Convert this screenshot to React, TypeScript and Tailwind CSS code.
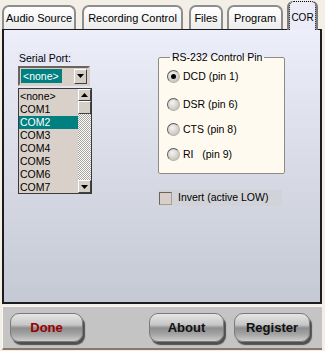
import React from "react";

function Radio({ checked }: { checked?: boolean }) {
  return (
    <div className="w-[13px] h-[13px] rounded-full border border-[#5a5a5a] border-b-[#b0b0b0] border-r-[#b0b0b0] bg-[radial-gradient(circle_at_40%_35%,#f4f4f4_0%,#d6d2ca_55%,#b8b4ac_100%)] flex items-center justify-center shrink-0">
      {checked ? <div className="w-[5px] h-[5px] rounded-full bg-black" /> : null}
    </div>
  );
}

function ArrowBtn({ dir, cls }: { dir: "up" | "down"; cls: string }) {
  return (
    <div className={"bg-[#d4d0c8] border border-t-white border-l-white border-r-[#404040] border-b-[#404040] flex items-center justify-center shrink-0 " + cls}>
      <svg width="7" height="4" viewBox="0 0 7 4">
        {dir === "down" ? <polygon points="0,0 7,0 3.5,4" fill="#000" /> : <polygon points="0,4 7,4 3.5,0" fill="#000" />}
      </svg>
    </div>
  );
}

const items = ["<none>", "COM1", "COM2", "COM3", "COM4", "COM5", "COM6", "COM7"];

export default function App() {
  return (
    <div className="w-[325px] h-[351px] bg-[#f3eee6] overflow-hidden font-['Liberation_Sans',Arial,sans-serif] text-black">
      {/* Tabs */}
      <div className="flex items-end h-[29px] pl-[2px]">
        <div className="w-[74px] h-[24px] flex items-center justify-center rounded-t-[7px] border-2 border-b-0 border-[#8d8d8d] bg-gradient-to-b from-white to-[#ececec] text-[11px] leading-none">Audio Source</div>
        <div className="ml-[6px] w-[101px] h-[24px] flex items-center justify-center rounded-t-[7px] border-2 border-b-0 border-[#8d8d8d] bg-gradient-to-b from-white to-[#ececec] text-[11px] leading-none">Recording Control</div>
        <div className="ml-[6px] w-[34px] h-[24px] flex items-center justify-center rounded-t-[7px] border-2 border-b-0 border-[#8d8d8d] bg-gradient-to-b from-white to-[#ececec] text-[11px] leading-none">Files</div>
        <div className="ml-[4px] w-[56px] h-[24px] flex items-center justify-center rounded-t-[7px] border-2 border-b-0 border-[#8d8d8d] bg-gradient-to-b from-white to-[#ececec] text-[11px] leading-none">Program</div>
        <div className="ml-[4px] w-[31px] h-[29px] -mb-[1px] relative z-10 rounded-t-[6px] border-x-2 border-[#7c7c7c] bg-[#ebecf8]">
          <div className="h-full border border-b-0 border-dotted border-black rounded-t-[5px] flex items-start justify-center pt-[11px] text-[10px] leading-none">COR</div>
        </div>
      </div>

      {/* Panel */}
      <div className="ml-[2px] w-[320px] h-[275px] border-2 border-t border-[#1c1c1c] bg-gradient-to-b from-[#eceefa] to-[#c5c9d3] flex pl-[14px] pt-[22px]">
        {/* Left column */}
        <div className="w-[74px] flex flex-col">
          <div className="w-[54px] h-[12px] bg-[#e6e7f5] text-[10.5px] leading-[12px] pl-[1px]">Serial Port:</div>
          <div className="mt-[2px] w-[72px] h-[20px] border-2 border-[#6e625a] border-b-[#d8d0c8] border-r-[#d8d0c8] bg-[#d8d0c8] flex items-center pl-[1px] pr-[1px]">
            <div className="w-[41px] h-[14px] bg-[#008080] text-white text-[10.5px] leading-[14px] pl-[2px]">&lt;none&gt;</div>
            <div className="flex-1" />
            <ArrowBtn dir="down" cls="w-[13px] h-[15px]" />
          </div>
          <div className="mt-[2px] w-[74px] h-[106px] border border-[#3a3a3a] bg-[#d9d1c9] flex">
            <div className="flex-1 flex flex-col pt-[1px]">
              {items.map((it) => (
                <div
                  key={it}
                  className={
                    it === "COM2"
                      ? "h-[13px] bg-[#008080] text-white text-[10.5px] leading-[13px] pl-[1px]"
                      : "h-[13px] text-[10.5px] leading-[13px] pl-[1px]"
                  }
                >
                  {it}
                </div>
              ))}
            </div>
            <div className="w-[13px] flex flex-col bg-[repeating-conic-gradient(#a8a4a0_0_25%,#ffffff_0_50%)] bg-[length:2px_2px]">
              <ArrowBtn dir="up" cls="w-[13px] h-[12px]" />
              <div className="w-[13px] h-[13px] bg-[#d4d0c8] border border-t-white border-l-white border-r-[#404040] border-b-[#404040]" />
              <div className="flex-1" />
              <ArrowBtn dir="down" cls="w-[13px] h-[13px]" />
            </div>
          </div>
        </div>

        {/* Right column */}
        <div className="ml-[66px] flex flex-col">
          <fieldset className="mt-[-1px] w-[127px] h-[123px] border border-[#8e8a86] rounded-[2px] bg-[#fffaf0] pl-[8px]">
            <legend className="ml-[3px] px-[2px] text-[10.5px] leading-[12px]">RS-232 Control Pin</legend>
            <div className="flex items-center h-[13px] mt-[7px]">
              <Radio checked />
              <span className="ml-[3px] text-[10.5px]">DCD (pin 1)</span>
            </div>
            <div className="flex items-center h-[13px] mt-[15px]">
              <Radio />
              <span className="ml-[3px] text-[10.5px]">DSR (pin 6)</span>
            </div>
            <div className="flex items-center h-[13px] mt-[12px]">
              <Radio />
              <span className="ml-[3px] text-[10.5px]">CTS (pin 8)</span>
            </div>
            <div className="flex items-center h-[13px] mt-[12px]">
              <Radio />
              <span className="ml-[3px] text-[10.5px] whitespace-pre">RI   (pin 9)</span>
            </div>
          </fieldset>
          <div className="mt-[16px] ml-[1px] w-[123px] h-[16px] bg-[#d2d3d9] flex items-center">
            <div className="w-[13px] h-[13px] border border-[#6e625a] border-b-[#a89e96] border-r-[#a89e96] bg-[#d8d0c8]" />
            <span className="ml-[6px] text-[10.5px]">Invert (active LOW)</span>
          </div>
        </div>
      </div>

      {/* Bottom bar */}
      <div className="mt-[2px] ml-[2px] w-[320px] h-[44px] bg-[#c4c4c4] border-l border-t border-[#faf7f0] border-b-2 border-b-[#8a7868] flex items-center pl-[7px] pr-[12px]">
        <div className="w-[73px] h-[29px] rounded-[9px] border border-[#7a7a7a] bg-[linear-gradient(to_bottom,#e6e6e6_0%,#c6c6c6_40%,#8e8e8e_52%,#a4a4a4_75%,#cdcdcd_100%)] shadow-[2px_3px_1px_rgba(40,40,40,0.75)] flex items-center justify-center text-[13px] font-bold text-[#990000]">Done</div>
        <div className="flex-1" />
        <div className="w-[75px] h-[29px] rounded-[9px] border border-[#7a7a7a] bg-[linear-gradient(to_bottom,#e6e6e6_0%,#c6c6c6_40%,#8e8e8e_52%,#a4a4a4_75%,#cdcdcd_100%)] shadow-[2px_3px_1px_rgba(40,40,40,0.75)] flex items-center justify-center text-[13px] font-bold text-[#111]">About</div>
        <div className="ml-[10px] w-[76px] h-[29px] rounded-[9px] border border-[#7a7a7a] bg-[linear-gradient(to_bottom,#e6e6e6_0%,#c6c6c6_40%,#8e8e8e_52%,#a4a4a4_75%,#cdcdcd_100%)] shadow-[2px_3px_1px_rgba(40,40,40,0.75)] flex items-center justify-center text-[13px] font-bold text-[#111]">Register</div>
      </div>
    </div>
  );
}
